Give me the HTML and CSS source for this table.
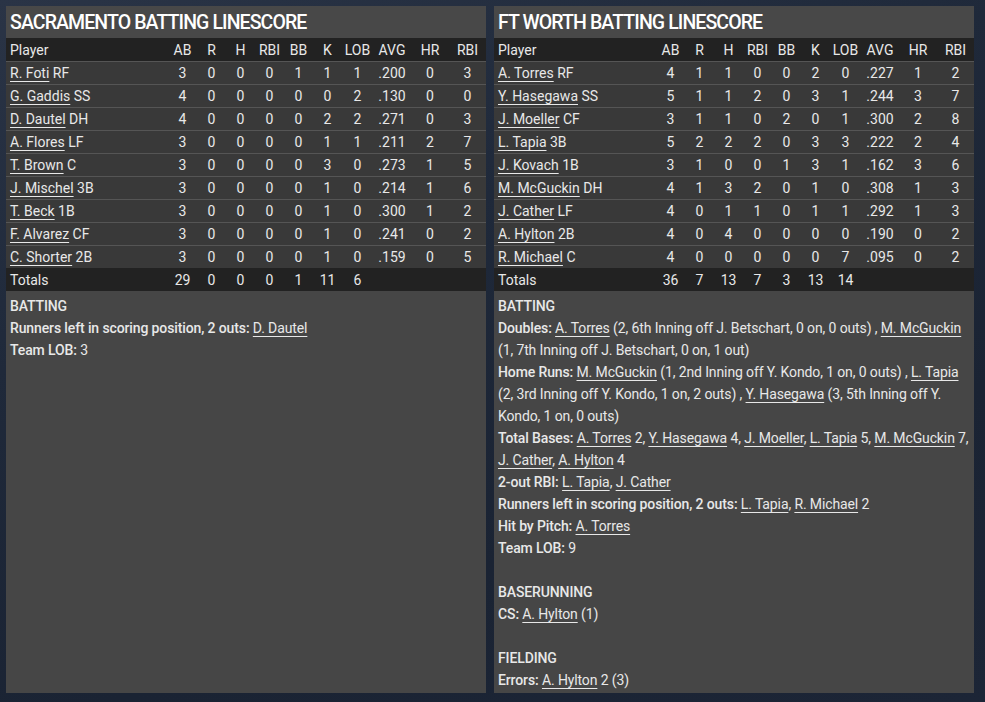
FILE: index.html
```html
<!DOCTYPE html>
<html>
<head>
<meta charset="utf-8">
<link rel="stylesheet" href="styles.css">
</head>
<body>
<div class="page">
  <section class="panel">
    <h2 class="title">SACRAMENTO BATTING LINESCORE</h2>
    <table class="box">
      <colgroup><col class="c-player"><col class="c-n"><col class="c-n"><col class="c-n"><col class="c-n"><col class="c-n"><col class="c-n"><col class="c-lob"><col class="c-avg"><col class="c-avg"><col class="c-last"></colgroup>
      <thead><tr><th class="pl">Player</th><th>AB</th><th>R</th><th>H</th><th>RBI</th><th>BB</th><th>K</th><th>LOB</th><th>AVG</th><th>HR</th><th>RBI</th></tr></thead>
      <tbody>
        <tr><td class="pl"><a>R. Foti</a> RF</td><td>3</td><td>0</td><td>0</td><td>0</td><td>1</td><td>1</td><td>1</td><td>.200</td><td>0</td><td>3</td></tr>
        <tr><td class="pl"><a>G. Gaddis</a> SS</td><td>4</td><td>0</td><td>0</td><td>0</td><td>0</td><td>0</td><td>2</td><td>.130</td><td>0</td><td>0</td></tr>
        <tr><td class="pl"><a>D. Dautel</a> DH</td><td>4</td><td>0</td><td>0</td><td>0</td><td>0</td><td>2</td><td>2</td><td>.271</td><td>0</td><td>3</td></tr>
        <tr><td class="pl"><a>A. Flores</a> LF</td><td>3</td><td>0</td><td>0</td><td>0</td><td>0</td><td>1</td><td>1</td><td>.211</td><td>2</td><td>7</td></tr>
        <tr><td class="pl"><a>T. Brown</a> C</td><td>3</td><td>0</td><td>0</td><td>0</td><td>0</td><td>3</td><td>0</td><td>.273</td><td>1</td><td>5</td></tr>
        <tr><td class="pl"><a>J. Mischel</a> 3B</td><td>3</td><td>0</td><td>0</td><td>0</td><td>0</td><td>1</td><td>0</td><td>.214</td><td>1</td><td>6</td></tr>
        <tr><td class="pl"><a>T. Beck</a> 1B</td><td>3</td><td>0</td><td>0</td><td>0</td><td>0</td><td>1</td><td>0</td><td>.300</td><td>1</td><td>2</td></tr>
        <tr><td class="pl"><a>F. Alvarez</a> CF</td><td>3</td><td>0</td><td>0</td><td>0</td><td>0</td><td>1</td><td>0</td><td>.241</td><td>0</td><td>2</td></tr>
        <tr><td class="pl"><a>C. Shorter</a> 2B</td><td>3</td><td>0</td><td>0</td><td>0</td><td>0</td><td>1</td><td>0</td><td>.159</td><td>0</td><td>5</td></tr>
      </tbody>
      <tfoot><tr><td class="pl">Totals</td><td>29</td><td>0</td><td>0</td><td>0</td><td>1</td><td>11</td><td>6</td><td></td><td></td><td></td></tr></tfoot>
    </table>
    <div class="notes">
      <div class="line"><b>BATTING</b></div>
      <div class="line"><b>Runners left in scoring position, 2 outs:</b> <a>D. Dautel</a></div>
      <div class="line"><b>Team LOB:</b> 3</div>
    </div>
  </section>
  <section class="panel">
    <h2 class="title">FT WORTH BATTING LINESCORE</h2>
    <table class="box">
      <colgroup><col class="c-player"><col class="c-n"><col class="c-n"><col class="c-n"><col class="c-n"><col class="c-n"><col class="c-n"><col class="c-lob"><col class="c-avg"><col class="c-avg"><col class="c-last"></colgroup>
      <thead><tr><th class="pl">Player</th><th>AB</th><th>R</th><th>H</th><th>RBI</th><th>BB</th><th>K</th><th>LOB</th><th>AVG</th><th>HR</th><th>RBI</th></tr></thead>
      <tbody>
        <tr><td class="pl"><a>A. Torres</a> RF</td><td>4</td><td>1</td><td>1</td><td>0</td><td>0</td><td>2</td><td>0</td><td>.227</td><td>1</td><td>2</td></tr>
        <tr><td class="pl"><a>Y. Hasegawa</a> SS</td><td>5</td><td>1</td><td>1</td><td>2</td><td>0</td><td>3</td><td>1</td><td>.244</td><td>3</td><td>7</td></tr>
        <tr><td class="pl"><a>J. Moeller</a> CF</td><td>3</td><td>1</td><td>1</td><td>0</td><td>2</td><td>0</td><td>1</td><td>.300</td><td>2</td><td>8</td></tr>
        <tr><td class="pl"><a>L. Tapia</a> 3B</td><td>5</td><td>2</td><td>2</td><td>2</td><td>0</td><td>3</td><td>3</td><td>.222</td><td>2</td><td>4</td></tr>
        <tr><td class="pl"><a>J. Kovach</a> 1B</td><td>3</td><td>1</td><td>0</td><td>0</td><td>1</td><td>3</td><td>1</td><td>.162</td><td>3</td><td>6</td></tr>
        <tr><td class="pl"><a>M. McGuckin</a> DH</td><td>4</td><td>1</td><td>3</td><td>2</td><td>0</td><td>1</td><td>0</td><td>.308</td><td>1</td><td>3</td></tr>
        <tr><td class="pl"><a>J. Cather</a> LF</td><td>4</td><td>0</td><td>1</td><td>1</td><td>0</td><td>1</td><td>1</td><td>.292</td><td>1</td><td>3</td></tr>
        <tr><td class="pl"><a>A. Hylton</a> 2B</td><td>4</td><td>0</td><td>4</td><td>0</td><td>0</td><td>0</td><td>0</td><td>.190</td><td>0</td><td>2</td></tr>
        <tr><td class="pl"><a>R. Michael</a> C</td><td>4</td><td>0</td><td>0</td><td>0</td><td>0</td><td>0</td><td>7</td><td>.095</td><td>0</td><td>2</td></tr>
      </tbody>
      <tfoot><tr><td class="pl">Totals</td><td>36</td><td>7</td><td>13</td><td>7</td><td>3</td><td>13</td><td>14</td><td></td><td></td><td></td></tr></tfoot>
    </table>
    <div class="notes">
      <div class="line"><b>BATTING</b></div>
      <div class="line"><b>Doubles:</b> <a>A. Torres</a> (2, 6th Inning off J. Betschart, 0 on, 0 outs) , <a>M. McGuckin</a> (1, 7th Inning off J. Betschart, 0 on, 1 out)</div>
      <div class="line"><b>Home Runs:</b> <a>M. McGuckin</a> (1, 2nd Inning off Y. Kondo, 1 on, 0 outs) , <a>L. Tapia</a> (2, 3rd Inning off Y. Kondo, 1 on, 2 outs) , <a>Y. Hasegawa</a> (3, 5th Inning off Y. Kondo, 1 on, 0 outs)</div>
      <div class="line"><b>Total Bases:</b> <a>A. Torres</a> 2, <a>Y. Hasegawa</a> 4, <a>J. Moeller</a>, <a>L. Tapia</a> 5, <a>M. McGuckin</a> 7, <a>J. Cather</a>, <a>A. Hylton</a> 4</div>
      <div class="line"><b>2-out RBI:</b> <a>L. Tapia</a>, <a>J. Cather</a></div>
      <div class="line"><b>Runners left in scoring position, 2 outs:</b> <a>L. Tapia</a>, <a>R. Michael</a> 2</div>
      <div class="line"><b>Hit by Pitch:</b> <a>A. Torres</a></div>
      <div class="line"><b>Team LOB:</b> 9</div>
      <div class="gap"></div>
      <div class="line"><b>BASERUNNING</b></div>
      <div class="line"><b>CS:</b> <a>A. Hylton</a> (1)</div>
      <div class="gap"></div>
      <div class="line"><b>FIELDING</b></div>
      <div class="line"><b>Errors:</b> <a>A. Hylton</a> 2 (3)</div>
    </div>
  </section>
</div>
</body>
</html>
```
FILE: styles.css
```css
html, body {
  margin: 0;
  padding: 0;
  height: 100%;
}
body {
  background: linear-gradient(160deg, #2a3446 0%, #1f293a 35%, #1a2333 70%, #1c2536 100%);
  font-family: Roboto, "Liberation Sans", sans-serif;
  color: #e8e8e8;
  font-size: 14px;
}
.page {
  display: flex;
  gap: 8px;
  padding: 6px 11px 9px 6px;
  height: 702px;
  box-sizing: border-box;
}
.panel {
  width: 480px;
  background: #464646;
  display: flex;
  flex-direction: column;
}
.title {
  margin: 0;
  height: 32px;
  line-height: 34px;
  padding-left: 4px;
  font-size: 19.5px;
  font-weight: 500;
  letter-spacing: -0.9px;
  color: #ffffff;
  background: #484848;
}
.box {
  width: 480px;
  border-collapse: collapse;
  table-layout: fixed;
}
.c-player { width: 162px; }
.c-n { width: 29px; }
.c-lob { width: 31px; }
.c-avg { width: 38px; }
.c-last { width: 37px; }
.box th, .box td {
  height: 23px;
  padding: 0;
  text-align: center;
  font-weight: 400;
  white-space: nowrap;
  font-size: 14px;
}
.box th.pl, .box td.pl {
  text-align: left;
  padding-left: 4px;
}
.box thead tr {
  background: #222222;
}
.box tbody tr {
  background: #393939;
  border-top: 1px solid #555555;
}
.box tbody tr td { height: 22px; }
.box tfoot tr {
  background: #222222;
}
a {
  color: inherit;
  text-decoration: underline;
  text-underline-offset: 3px;
  text-decoration-thickness: 1px;
}
.notes {
  padding: 4px 4px 0 4px;
}
.line {
  line-height: 22px;
  font-size: 14px;
  letter-spacing: -0.12px;
}
.line b { font-weight: 500; }
.gap { height: 22px; }
```
